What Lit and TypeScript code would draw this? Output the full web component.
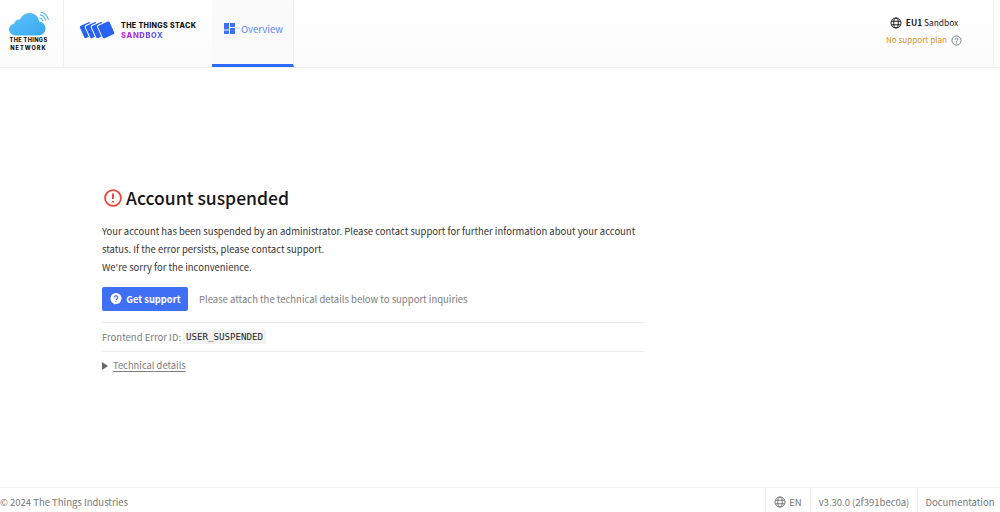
import { LitElement, html, css } from "lit";
import { customElement } from "lit/decorators.js";

const globe = (s: number) => html`<svg width=${s} height=${s} viewBox="0 0 24 24" fill="none" stroke="currentColor" stroke-width="2"><circle cx="12" cy="12" r="10"/><ellipse cx="12" cy="12" rx="4.5" ry="10"/><path d="M3 8.5h18M3 15.5h18"/></svg>`;

@customElement("app-root")
export class AppRoot extends LitElement {
  static styles = css`
    :host { display: flex; flex-direction: column; height: 512px; width: 1000px; overflow: hidden; background: #fff; font-family: "Noto Sans CJK JP", "Noto Sans", sans-serif; font-size: 13px; color: #3c3c3c; }
    * { box-sizing: border-box; }
    header { height: 68px; flex: none; display: flex; border-bottom: 1px solid #ececec; background: linear-gradient(180deg, #fff 0%, #fbfbfb 100%); }
    .ttn { width: 64px; border-right: 1px solid #efefef; display: flex; flex-direction: column; align-items: center; padding: 12px 6px 0 0; }
    .ttn .t { font-family: "Inter", sans-serif; font-weight: 800; font-size: 5.6px; line-height: 7.5px; color: #111; text-align: center; letter-spacing: .35px; margin-top: 1px; }
    .ttn .t span { display: block; letter-spacing: 1px; }
    .stack { width: 148px; display: flex; align-items: center; padding: 0 0 8px 15px; gap: 6px; }
    .stack .names { font-family: "Inter", sans-serif; font-weight: 800; font-size: 7.1px; line-height: 10px; color: #111; letter-spacing: .35px; margin-top: 2px; }
    .sandbox { background: linear-gradient(90deg, #d216e6, #3f66ff); -webkit-background-clip: text; background-clip: text; color: transparent; display: block; width: fit-content; font-size: 7.6px; letter-spacing: .6px; }
    .tab { width: 82px; display: flex; align-items: center; justify-content: center; gap: 6px; border-bottom: 3px solid #2f6bf6; border-right: 1px solid #f0f0f0; color: #5f86f7; font-size: 9.6px; background: #fafafa; padding: 0 0 7px 2px; height: 67px; margin-bottom: -1px; }
    .spacer { flex: 1; }
    .region { width: 141px; display: flex; flex-direction: column; align-items: center; padding: 14px 0 0 2px; border-right: 1px solid #f3f3f3; margin-right: 6px; }
    .eu { display: flex; align-items: center; gap: 4px; font-size: 8.4px; line-height: 17px; color: #222; }
    .eu b { font-weight: 700; }
    .plan { display: flex; align-items: center; gap: 4px; color: #d8912f; font-size: 8.1px; line-height: 16px; margin-top: 1px; }
    .plan svg { color: #6a7480; }
    main { flex: 1; padding: 117px 356px 0 102px; }
    h1 { margin: 0; display: flex; align-items: center; gap: 4px; font-size: 17.5px; font-weight: 500; line-height: 26px; color: #151515; padding-left: 2px; }
    .msg { margin: 11px 0 0; font-size: 9.47px; line-height: 18px; color: #333; }
    .actions { display: flex; align-items: center; margin-top: 11px; gap: 11px; }
    .btn { width: 86px; height: 24px; background: #3f6ff5; border-radius: 2px; color: #fff; font-weight: 700; font-size: 9.3px; display: flex; align-items: center; justify-content: center; gap: 4px; padding-left: 1px; }
    .hint { font-size: 9.5px; color: #7d7d7d; }
    .err { margin-top: 11px; height: 30px; border-top: 1px solid #ededed; border-bottom: 1px solid #ededed; display: flex; align-items: center; gap: 2px; font-size: 9.5px; color: #7d7d7d; }
    code { font-family: "DejaVu Sans Mono", monospace; font-size: 9.15px; color: #222; background: #f2f2f2; padding: 2px 3px; line-height: 10px; }
    .details { display: flex; align-items: center; gap: 5px; margin-top: 6px; font-size: 9.4px; line-height: 15px; color: #7d7d7d; }
    .details u { text-underline-offset: 2px; }
    .tri { width: 0; height: 0; border-left: 6px solid #666; border-top: 4px solid transparent; border-bottom: 4px solid transparent; }
    footer { height: 25px; flex: none; border-top: 1px solid #efefef; display: flex; align-items: center; font-size: 9.5px; color: #777; }
    .copy { flex: 1; padding-top: 4px; }
    .cell { height: 100%; display: flex; align-items: center; justify-content: center; gap: 3px; border-left: 1px solid #efefef; padding-top: 3px; }
    .lang { width: 45px; } .ver { width: 107px; } .doc { width: 83px; padding-left: 2px; }
  `;

  render() {
    return html`
      <header>
        <div class="ttn">
          <svg width="40" height="24" viewBox="0 0 40 24">
            <defs><linearGradient id="c" x1="0" x2="1" y1="0" y2="1"><stop offset="0" stop-color="#5cc4fb"/><stop offset="1" stop-color="#3aa7f0"/></linearGradient></defs>
            <path fill="url(#c)" d="M7 23.5C3 23.5 0 20.8 0 17.5c0-3 2.2-5.2 5-5.8C6 8.8 8.5 7.2 11 7.6 12.8 3.4 16.5 1 20.5 1c5.2 0 9.2 3.8 9.6 8.6 4 .6 6.4 3.6 6.4 7 0 3.8-3 6.9-7 6.9z"/>
            <path fill="none" stroke="#4ab4f5" stroke-width="1.1" d="M30.5 5.5c2 .6 3 2 3.4 3.8M31 2.7c3.2.8 5 3 5.6 6M31.8 0c4.2 1 6.8 4 7.6 8"/>
          </svg>
          <div class="t">THE THINGS<span>NETWORK</span></div>
        </div>
        <div class="stack">
          <svg width="36" height="22" viewBox="0 0 36 22" fill="#2764f5">
            <g stroke="#fff" stroke-width="1" stroke-linejoin="round">
              <rect x="2" y="4" width="12.5" height="14.5" rx="2" transform="rotate(-24 8 11)"/>
              <rect x="8" y="4" width="12.5" height="14.5" rx="2" transform="rotate(-24 14 11)"/>
              <rect x="14" y="4" width="12.5" height="14.5" rx="2" transform="rotate(-24 20 11)"/>
              <rect x="20.5" y="3.5" width="13.5" height="15" rx="2" transform="rotate(-24 27 11)"/>
            </g>
          </svg>
          <div class="names">THE THINGS STACK<span class="sandbox">SANDBOX</span></div>
        </div>
        <div class="tab">
          <svg width="11" height="11" viewBox="0 0 11 11" fill="#3f6ff5"><rect width="5" height="6.5"/><rect x="6" width="5" height="4"/><rect y="7.5" width="5" height="3.5"/><rect x="6" y="5" width="5" height="6"/></svg>
          Overview
        </div>
        <div class="spacer"></div>
        <div class="region">
          <div class="eu">${globe(12)}<span><b>EU1</b> Sandbox</span></div>
          <div class="plan">No support plan
            <svg width="11" height="11" viewBox="0 0 24 24" fill="none" stroke="currentColor" stroke-width="2"><circle cx="12" cy="12" r="10"/><path d="M9 9.5a3 3 0 1 1 4.6 2.5c-1 .7-1.6 1.3-1.6 2.5M12 17v1.5"/></svg>
          </div>
        </div>
      </header>
      <main>
        <h1>
          <svg width="18" height="18" viewBox="0 0 20 20" fill="none" stroke="#f04438" stroke-width="2"><circle cx="10" cy="10" r="8.8"/><path d="M10 5v6.2M10 13.2v1.8" stroke-width="2.2"/></svg>
          Account suspended
        </h1>
        <p class="msg">Your account has been suspended by an administrator. Please contact support for further information about your account status. If the error persists, please contact support.<br>We're sorry for the inconvenience.</p>
        <div class="actions">
          <div class="btn">
            <svg width="12" height="12" viewBox="0 0 24 24"><circle cx="12" cy="11" r="11" fill="#fff"/><path d="M8 23l1-5 5 3z" fill="#fff"/><path d="M8.5 9a3.5 3.5 0 1 1 5.4 2.9c-1.2.8-1.9 1.3-1.9 2.6M12 16.5v2" fill="none" stroke="#3f6ff5" stroke-width="2.4"/></svg>
            Get support
          </div>
          <span class="hint">Please attach the technical details below to support inquiries</span>
        </div>
        <div class="err">Frontend Error ID: <code>USER_SUSPENDED</code></div>
        <div class="details"><span class="tri"></span><u>Technical details</u></div>
      </main>
      <footer>
        <div class="copy">© 2024 The Things Industries</div>
        <div class="cell lang">${globe(12)} EN</div>
        <div class="cell ver">v3.30.0 (2f391bec0a)</div>
        <div class="cell doc">Documentation</div>
      </footer>
    `;
  }
}
